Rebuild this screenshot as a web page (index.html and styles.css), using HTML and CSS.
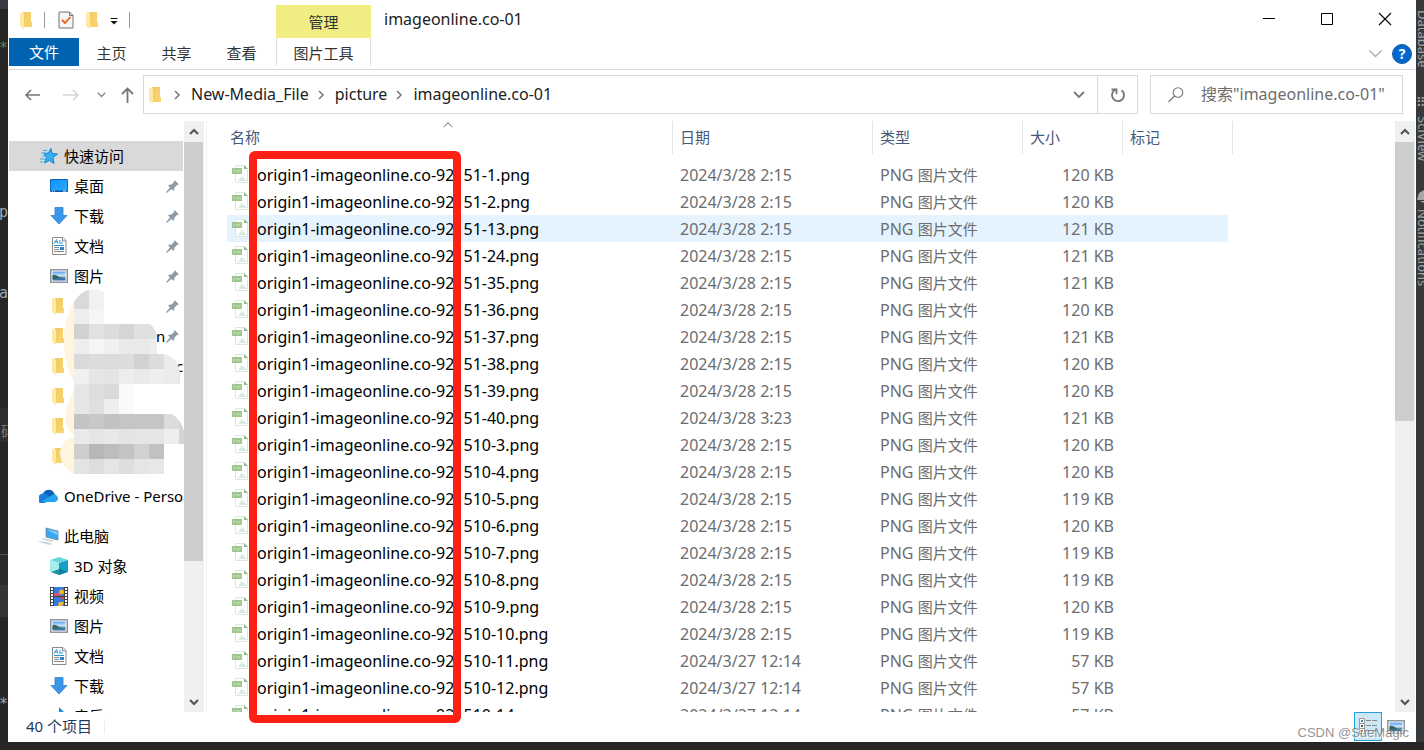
FILE: index.html
```html
<!DOCTYPE html>
<html lang="zh-CN">
<head>
<meta charset="utf-8">
<title>imageonline.co-01</title>
<link rel="stylesheet" href="styles.css">
</head>
<body>
<svg class="defs" aria-hidden="true">
  <defs>
    <linearGradient id="gf" x1="0" y1="0" x2="1" y2="1"><stop offset="0" stop-color="#f0c96c"/><stop offset="1" stop-color="#fbd66a"/></linearGradient>
    <linearGradient id="gs" x1="0" y1="0" x2="0" y2="1"><stop offset="0" stop-color="#5c9cf0"/><stop offset=".5" stop-color="#d8ecfa"/><stop offset=".62" stop-color="#5f97a4"/><stop offset="1" stop-color="#2f64b4"/></linearGradient>
    <linearGradient id="gd" x1="0" y1="0" x2="1" y2="1"><stop offset="0" stop-color="#1291ff"/><stop offset="1" stop-color="#2aabff"/></linearGradient>
  </defs>
  <symbol id="folder" viewBox="0 0 14 18"><path d="M4 1h8v10h1v5H4z" fill="url(#gf)"/><path d="M1 1l4 2v15l-4-3z" fill="#ffe8a3"/></symbol>
  <symbol id="desktop" viewBox="0 0 18 14"><path d="M.5.5h17v12H.5z" fill="url(#gd)" stroke="#0b67b5"/><path d="M1 12h16" stroke="#0a4f96"/><path d="M2 12h1m1 0h1m8 0h3" stroke="#e6f5ff"/></symbol>
  <symbol id="down" viewBox="0 0 18 18"><path d="M5 .5h8v8h4L9 17 1 8.500h4z" fill="#3996e8" stroke="#2e7fd0" stroke-width=".8"/></symbol>
  <symbol id="doc" viewBox="0 0 18 18"><path d="M2.500 .5h10.500l3 3v14H2.500z" fill="#fff" stroke="#8b8b8b"/><path d="M12.500.5V4H16" fill="#eee" stroke="#8b8b8b"/><path d="M4 6.500l2.500-4L8 6.500M5 5h3m1-1h2M9 6h4M4 8.500h10" fill="none" stroke="#2196d6"/><path d="M4 10.500h5m-5 2h5m-5 2h10" stroke="#888"/><path d="M10 10h4v3h-4z" fill="#3283c8"/></symbol>
  <symbol id="picture" viewBox="0 0 18 14"><path d="M.75.75h16.500v12.500H.75z" fill="#fff" stroke="#8f969c" stroke-width="1.500"/><path d="M2.500 2.500h13v9h-13z" fill="url(#gs)"/><path d="M2.500 6q3-1 6 1.500t5 1.500l-11 1z" fill="#35675c"/></symbol>
  <symbol id="pin" viewBox="0 0 13 13"><path d="M8.500 0L13 4.500l-2 .5-2.500 2.500-.5 3.500-2.500-2L.7 13l-.7-.7L4 7.500 2 5l3.500-.5L8 2z" fill="#8e9ba6"/></symbol>
  <symbol id="star" viewBox="0 0 18 16"><path d="M11 .5l1 5 5.500.5-4.500 3.500 1 6-4.500-3-5 2.500 2-5.500-2.500-4 4.500-.5z" fill="#35b0f5" stroke="#1481cc"/><path d="M3 2.500h4M1 5h4M2 8h3M0 11h5M0 14h3" stroke="#3ea9e8"/></symbol>
  <symbol id="cloud" viewBox="0 0 20 14"><path d="M4 13a4 4 0 0 1 0-8 6 6 0 0 1 11-1l2 4-7 5z" fill="#0a63b8"/><path d="M1 6a5 5 0 0 1 6-1l8 6-10 3a4 4 0 0 1-4-8z" fill="#1680dc"/><path d="M3 12.500L13 6q3-1.500 4.500.5A3.600 3.600 0 0 1 16 13H4z" fill="#28a3ed"/></symbol>
  <symbol id="pc" viewBox="0 0 20 18"><path d="M7 1l12 3v9L7 10z" fill="#35a9f5" stroke="#6f8794" stroke-width=".8"/><path d="M7.500 2l11 2.500v4z" fill="#7dcafa"/><path d="M4 11l11 2.500-3 1.500-10-3zM0 14l8 1 6 2-4 1-10-3z" fill="#cfd6da"/></symbol>
  <symbol id="cube" viewBox="0 0 18 18"><path d="M9 0l9 3-9 3-9-3z" fill="#66d6dc"/><path d="M0 3l9 3v12l-9-3z" fill="#9ce7e6"/><path d="M18 3L9 6v12l9-3z" fill="#159fc8"/><path d="M1 15l8-4 8 4-8 3z" fill="#087c95" opacity=".8"/><path d="M0 3l9 3v6L1 15z" fill="#a5eeee"/></symbol>
  <symbol id="film" viewBox="0 0 18 19"><path d="M0 0h18v19H0z" fill="#444"/><path d="M4 0h10v9H4zM4 10h10v9H4z" fill="#3979da"/><path d="M2 1v17M16 1v17" stroke="#fff" stroke-width="2" stroke-dasharray="2 1"/><path d="M4 6h5v3H4z" fill="#d75482"/><circle cx="11.500" cy="5" r="2.500" fill="#efba20"/><path d="M10 10h4l-2 3z" fill="#e24528"/><path d="M9 15h5l-2 4H8z" fill="#f3c02c"/></symbol>
  <symbol id="music" viewBox="0 0 16 18"><path d="M8 0l5 5v3L10 6v8a4 3 0 1 1-2-3z" fill="#1690ea"/></symbol>
  <symbol id="png" viewBox="0 0 17 18"><path d="M3.500.5H12L15.500 4v13.500h-12z" fill="#fff" stroke="#dce8d9"/><path d="M12 0l4 4h-4z" fill="#8dbd83"/><path d="M0 3h10v6H0z" fill="#9dc68d"/><path d="M2 7.500V5h1v1H2M5 7.500V5l1 2V5M9 5H7.500v2H9" fill="none" stroke="#c5dfb9" stroke-width=".7"/><path d="M6 16l4-5 2 2 3 3z" fill="#d6e9e3"/></symbol>
  <symbol id="chev-down" viewBox="0 0 12 8"><path d="M1 1l5 5 5-5" fill="none" stroke="currentColor" stroke-width="1.800"/></symbol>
  <symbol id="chev-right" viewBox="0 0 7 10"><path d="M1 1l4 4-4 4" fill="none" stroke="#777" stroke-width="1.500"/></symbol>
  <symbol id="sb-up" viewBox="0 0 10 8"><path d="M1 6l4-4 4 4" fill="none" stroke="#555" stroke-width="2.200"/></symbol>
  <symbol id="sb-down" viewBox="0 0 10 8"><path d="M1 2l4 4 4-4" fill="none" stroke="#555" stroke-width="2.200"/></symbol>
</svg>

<div class="desktop">
  <aside class="editor-left" aria-hidden="true">
    <span class="bit green">**</span><span class="bit p">p</span><span class="bit a">a</span><span class="bit han-dim">码</span><span class="bit stars">**</span>
  </aside>

  <main class="window">
    <header class="titlebar">
      <div class="quick">
        <svg width="14" height="18"><use href="#folder"/></svg>
        <i class="sep"></i>
        <button class="plain props" aria-label="属性"><svg width="16" height="18" viewBox="0 0 16 18"><path d="M1 1h10.500l3.500 3.500V17H1z" fill="#f6f6f6" stroke="#757575"/><path d="M11.500 1v3.500H15" fill="none" stroke="#757575"/><path d="M4 9l3 3 5.500-6" fill="none" stroke="#ee5a17" stroke-width="1.800"/></svg></button>
        <button class="plain" aria-label="新建文件夹"><svg width="14" height="18"><use href="#folder"/></svg></button>
        <button class="plain more" aria-label="自定义"><svg width="8" height="7" viewBox="0 0 8 7"><path d="M.5 0h7v1h-7zM.5 3h7L4 6.500z" fill="#111"/></svg></button>
        <i class="sep"></i>
      </div>
      <div class="context">管理</div>
      <h1>imageonline.co-01</h1>
      <div class="controls">
        <button aria-label="最小化"><svg width="12" height="12" viewBox="0 0 12 12"><path d="M0 5.500h12" stroke="#000"/></svg></button>
        <button aria-label="最大化"><svg width="12" height="12" viewBox="0 0 12 12"><path d="M.5.5h11v11H.5z" fill="none" stroke="#000"/></svg></button>
        <button aria-label="关闭"><svg width="12" height="12" viewBox="0 0 12 12"><path d="M0 0l12 12m0-12L0 12" stroke="#000" stroke-width="1.100"/></svg></button>
      </div>
    </header>

    <nav class="ribbon">
      <button class="tab file">文件</button><button class="tab">主页</button><button class="tab">共享</button><button class="tab">查看</button><button class="tab tools">图片工具</button>
      <button class="plain collapse" aria-label="展开功能区"><svg width="13" height="8" viewBox="0 0 13 8"><path d="M.5.5l6 6 6-6" fill="none" stroke="#aaa" stroke-width="1.300"/></svg></button>
      <button class="help" aria-label="帮助">?</button>
    </nav>

    <div class="navbar">
      <div class="arrows">
        <button class="plain" aria-label="返回"><svg width="16" height="12" viewBox="0 0 16 12"><path d="M6 1L1 6l5 5M1 6h14" fill="none" stroke="#777" stroke-width="1.600"/></svg></button>
        <button class="plain" aria-label="前进"><svg width="16" height="12" viewBox="0 0 16 12"><path d="M10 1l5 5-5 5M15 6H0" fill="none" stroke="#d5d5d5" stroke-width="1.600"/></svg></button>
        <button class="plain recent" aria-label="最近的位置"><svg width="9" height="6"><use href="#chev-down"/></svg></button>
        <button class="plain" aria-label="上移"><svg width="13" height="16" viewBox="0 0 13 16"><path d="M1 7l5.500-5.500L12 7M6.500 2v14" fill="none" stroke="#777" stroke-width="1.800"/></svg></button>
      </div>
      <div class="address">
        <svg width="14" height="18"><use href="#folder"/></svg>
        <svg width="7" height="10"><use href="#chev-right"/></svg><a href="#">New-Media_File</a>
        <svg width="7" height="10"><use href="#chev-right"/></svg><a href="#">picture</a>
        <svg width="7" height="10"><use href="#chev-right"/></svg><a href="#">imageonline.co-01</a>
        <button class="plain drop" aria-label="以前的位置"><svg width="12" height="8"><use href="#chev-down"/></svg></button>
        <button class="plain refresh" aria-label="刷新"><svg width="16" height="16" viewBox="0 0 16 16"><path d="M11.500 3.300A6 6 0 1 1 5.500 2.700" fill="none" stroke="#777" stroke-width="1.900"/><path d="M6.500 7V2.500H1.500" fill="none" stroke="#777" stroke-width="1.800"/></svg></button>
      </div>
      <label class="search">
        <svg width="16" height="16" viewBox="0 0 16 16"><circle cx="10" cy="5.500" r="4.800" fill="none" stroke="#777" stroke-width="1.100"/><path d="M6.500 9L.5 15" stroke="#777" stroke-width="1.200"/></svg>
        <input type="text" aria-label="搜索" placeholder="搜索&quot;imageonline.co-01&quot;">
      </label>
    </div>

    <div class="content">
      <div class="sidebar">
        <ul class="tree">
          <li class="root active"><svg width="18" height="16"><use href="#star"/></svg>快速访问</li>
          <li><svg width="18" height="14"><use href="#desktop"/></svg>桌面<svg class="pin" width="13" height="13"><use href="#pin"/></svg></li>
          <li><svg width="18" height="18"><use href="#down"/></svg>下载<svg class="pin" width="13" height="13"><use href="#pin"/></svg></li>
          <li><svg width="18" height="18"><use href="#doc"/></svg>文档<svg class="pin" width="13" height="13"><use href="#pin"/></svg></li>
          <li><svg width="18" height="14"><use href="#picture"/></svg>图片<svg class="pin" width="13" height="13"><use href="#pin"/></svg></li>
          <li class="dir"><svg width="14" height="18"><use href="#folder"/></svg><svg class="pin" width="13" height="13"><use href="#pin"/></svg></li>
          <li class="dir"><svg width="14" height="18"><use href="#folder"/></svg><span class="tail">n</span><svg class="pin near" width="13" height="13"><use href="#pin"/></svg></li>
          <li class="dir"><svg width="14" height="18"><use href="#folder"/></svg><span class="tail edge">c</span></li>
          <li class="dir"><svg width="14" height="18"><use href="#folder"/></svg></li>
          <li class="dir"><svg width="14" height="18"><use href="#folder"/></svg></li>
          <li class="dir"><svg width="14" height="18"><use href="#folder"/></svg></li>
          <li class="root group"><svg width="20" height="14"><use href="#cloud"/></svg>OneDrive - Personal</li>
          <li class="root group"><svg width="20" height="18"><use href="#pc"/></svg>此电脑</li>
          <li><svg width="18" height="18"><use href="#cube"/></svg>3D 对象</li>
          <li><svg width="18" height="19"><use href="#film"/></svg>视频</li>
          <li><svg width="18" height="14"><use href="#picture"/></svg>图片</li>
          <li><svg width="18" height="18"><use href="#doc"/></svg>文档</li>
          <li><svg width="18" height="18"><use href="#down"/></svg>下载</li>
          <li><svg width="18" height="18"><use href="#music"/></svg>音乐</li>
        </ul>
        <svg class="mosaic" width="126" height="186" viewBox="0 0 126 186" aria-hidden="true">
          <clipPath id="blot"><path d="M4 45Q8 12 25 2Q36-2 44 3V35H90Q97 40 97 50V65H104Q118 69 120 83V95H74V125H112Q125 133 125 152L120 163V155H104V185H14Q0 177 0 163Q2 150 15 147Q-1 138 9 112Q16 100 14 93Q3 76 4 45z"/></clipPath>
          <g clip-path="url(#blot)" id="cells"><path d="M0 0h14v186H0z" fill="#fff5df"/><path d="M14 0h15v6H14z" fill="#d9d9d9"/><path d="M29 0h16v6H29z" fill="#f1f1f1"/></g>
        </svg>
      </div>
      <div class="scrollbar"><button aria-label="向上"><svg width="10" height="8"><use href="#sb-up"/></svg></button><div class="thumb tree-thumb"></div><button aria-label="向下"><svg width="10" height="8"><use href="#sb-down"/></svg></button></div>

      <div class="files">
        <svg class="sort" width="10" height="6" viewBox="0 0 10 6"><path d="M.5 5L5 .8 9.500 5" fill="none" stroke="#666"/></svg>
        <table>
          <colgroup><col class="c-name"><col class="c-date"><col class="c-type"><col class="c-size"><col class="c-tag"><col class="c-end"></colgroup>
          <thead><tr><th><div>名称</div></th><th><div>日期</div></th><th><div>类型</div></th><th><div>大小</div></th><th colspan="2"><div>标记</div></th></tr></thead>
          <tbody id="rows"></tbody>
        </table>
      </div>
      <div class="scrollbar"><button aria-label="向上"><svg width="10" height="8"><use href="#sb-up"/></svg></button><div class="thumb list-thumb"></div><button aria-label="向下"><svg width="10" height="8"><use href="#sb-down"/></svg></button></div>
    </div>

    <footer class="status">
      <span class="count">40 个项目</span>
      <div class="views">
        <button class="on" aria-label="详细信息"><svg width="19" height="18" viewBox="0 0 19 18"><path d="M.5.5h5v5h-5zM.5 5.500h5v5h-5zM.5 10.500h5v5h-5z" fill="#fff" stroke="#999"/><path d="M2 2h2v2H2z" fill="#3d8a9a"/><path d="M2 7h2v2H2z" fill="#3a6f4c"/><path d="M2 12h2v2H2z" fill="#c8502a"/><path d="M7 2.500h5m1 0h5M7 7.500h5m1 0h5M7 12.500h5m1 0h5" stroke="#888"/></svg></button>
        <button aria-label="大图标"><svg width="18" height="14"><use href="#picture"/></svg></button>
      </div>
    </footer>
    <div class="marker"></div>
    <div class="watermark">CSDN @SueMagic</div>
  </main>

  <aside class="editor-right" aria-hidden="true">
    <span class="v db">Database</span><span class="grip">⠿</span><span class="v sci">SciView</span><svg width="8" height="13" viewBox="0 0 8 13"><path d="M1 10l2-7 5-3v10zM4 11h4v2z" fill="#a5a7a8"/></svg><span class="v note">Notifications</span>
  </aside>
</div>
<script src="script.js"></script>
</body>
</html>
```

FILE: styles.css
```css
* { box-sizing: border-box; }
body { margin: 0; background: #262626; color: #000; font: 15px/20px "Noto Sans", "Noto Sans CJK SC", sans-serif; }
svg { display: block; flex: none; overflow: visible; }
button { font: inherit; color: inherit; border: 0; padding: 0; background: none; display: flex; align-items: center; justify-content: center; }
.defs { position: absolute; width: 0; height: 0; }
.desktop { display: grid; grid-template-columns: 8px minmax(0, 1fr) 8px; height: 100vh; padding-bottom: 8px; overflow: hidden; }

.editor-left { position: relative; overflow: hidden; background: linear-gradient(#373b3f 0 9px, #262626 9px 408px, #2e2e2e 408px 442px, #262626 442px 554px, #555 554px 555px, #2b2b2b 555px 585px, #333537 585px 617px, #262626 617px); }
.bit { position: absolute; right: 0; color: #9aa5b1; font: 15px/20px "DejaVu Sans Mono", monospace; }
.green { top: 38px; color: #54804f; }
.p { top: 202px; }
.a { top: 283px; }
.han-dim { top: 421px; left: 1px; color: #777; font-family: "Noto Sans CJK SC", sans-serif; }
.stars { top: 694px; }
.editor-right { display: flex; flex-direction: column; align-items: flex-start; overflow: hidden; background: #37393b; color: #a2a4a5; font-size: 13px; line-height: 13px; }
.v { writing-mode: vertical-rl; }
.db { padding-top: 10px; }
.grip { padding-top: 28px; height: 48px; }
.sci { height: 74px; }
.note { padding-top: 6px; }

.window { position: relative; display: flex; flex-direction: column; min-width: 0; min-height: 0; padding: 0 1px; background: #fff; }
.plain { flex: none; }
.titlebar { display: flex; height: 38px; flex: none; }
.quick { display: flex; align-items: center; gap: 11px; width: 267px; padding: 2px 0 0 10px; }
.sep { width: 1px; height: 16px; background: #999; }
.props { margin-left: 2px; }
.more { padding-top: 3px; }
.context { width: 95px; margin-top: 5px; padding-top: 7px; text-align: center; background: #f0ee82; color: #333; }
h1 { margin: 0 auto 0 13px; font-size: 16px; font-weight: 400; line-height: 38px; color: #222; }
.controls { display: flex; padding-right: 1px; }
.controls button { width: 58px; }

.ribbon { display: flex; align-items: center; height: 32px; flex: none; padding-right: 3px; border-bottom: 1px solid #dadada; }
.tab { width: 65px; height: 28px; align-self: flex-start; padding-top: 2px; color: #333; }
.file { width: 70px; padding: 0; background: #0063b1; color: #fff; }
.tools { width: 95px; margin-left: 2px; border: solid #ddd; border-width: 0 1px; }
.collapse { margin-left: auto; }
.help { width: 20px; height: 20px; margin-left: 10px; border-radius: 50%; border: 1px solid #175ca2; background: #0067cf; color: #fff; font-weight: 700; font-size: 14px; line-height: 18px; }

.navbar { display: flex; flex: none; height: 51px; padding: 5px 12px 7px 16px; }
.arrows { display: flex; align-items: center; width: 118px; gap: 22px; }
.arrows .recent { margin: 0 -7px 0 -4px; color: #888; }
.address { display: flex; align-items: center; flex: 1; min-width: 0; height: 39px; padding-left: 4px; border: 1px solid #d9d9d9; font-size: 16px; color: #777; }
.address a { color: #222; text-decoration: none; margin: 0 9px 2px 10px; }
.address > svg:first-child { margin-right: 12px; }
.drop { width: 36px; height: 37px; margin-left: auto; }
.refresh { width: 40px; height: 37px; border-left: 1px solid #d9d9d9; }
.search { display: flex; align-items: center; gap: 17px; width: 253px; height: 39px; margin-left: 12px; padding-left: 17px; border: 1px solid #d9d9d9; }
.search input { flex: 1; min-width: 0; border: 0; padding: 0 0 2px; background: none; font: inherit; font-size: 16px; outline: 0; }
.search input::placeholder { color: #6d6d6d; opacity: 1; }

.content { display: flex; flex: 1; min-height: 0; }
.sidebar { position: relative; width: 175px; flex: none; overflow: hidden; }
.tree { list-style: none; margin: 0; padding: 20px 0 0; width: 174px; overflow: hidden; }
.tree li { display: flex; align-items: center; gap: 6px; height: 30px; padding: 0 4px 0 41px; white-space: nowrap; }
.tree .dir { padding-left: 42px; gap: 9px; }
.tree .root { padding-left: 31px; }
.tree .root > svg[width="20"] { margin: 0 -1px; }
.tree .active { background: #d9d9d9; }
.tree .group { margin-top: 10px; }
.tree .pin { margin-left: auto; }
.tail { margin-left: 82px; }
.tree .near { margin-left: -8px; }
.tail.edge { margin-left: 102px; }
.mosaic { position: absolute; left: 51px; top: 168px; }
.scrollbar { display: flex; flex-direction: column; width: 20px; flex: none; background: #f0f0f0; }
.scrollbar button { flex: none; height: 21px; }
.scrollbar button:last-child { margin-top: auto; }
.thumb { width: 19px; background: #cdcdcd; }
.tree-thumb { flex: 0 1 419px; }
.list-thumb { flex: 0 1 279px; }

.files { position: relative; flex: 1; min-width: 0; overflow: hidden; margin-left: 2px; padding-left: 20px; border-left: 1px solid #f3f3f3; }
.sort { position: absolute; left: 236px; top: 1px; }
table { table-layout: fixed; border-collapse: collapse; width: 1006px; }
.c-name { width: 446px; }
.c-date { width: 200px; }
.c-type { width: 150px; }
.c-size { width: 100px; }
.c-tag { width: 105px; }
th { padding: 0 0 7px; font-weight: 400; text-align: left; color: #44597a; }
th div { height: 33px; padding: 6px 0 0 7px; border-right: 1px solid #e5e5e5; }
th:first-child div { padding-left: 3px; }
tbody { font-size: 16px; line-height: 20px; color: #6d6d6d; }
td { height: 27px; padding: 0 9px 0 7px; white-space: nowrap; }
td:first-child { padding-left: 5px; color: #000; }
.name { display: flex; align-items: center; gap: 8px; }
.name svg { margin-top: -2px; }
.han { font-size: 15px; }
.size { text-align: right; }
.hover td:not(:last-child) { background: #e5f3ff; }

.status { display: flex; flex: none; justify-content: space-between; height: 30px; color: #1e395b; }
.count { margin-top: 7px; height: 15px; padding: 0 12px 0 17px; border-right: 1px solid #eee; line-height: 14px; }
.views { display: flex; padding-right: 5px; }
.views button { width: 28px; height: 29px; }
.views .on { background: #cce8f6; border: 1px solid #26a0da; }

.marker { position: absolute; left: 241px; top: 151px; width: 212px; bottom: 19px; border: 8px solid #fe2013; border-radius: 6px; }
.watermark { position: absolute; right: 7px; bottom: -1px; color: #777c; font: 13px/20px "Liberation Sans", sans-serif; text-shadow: 1px 1px 1px #fff; }
```

FILE: script.js
```javascript
const files = [
  ['51-1', '3/28 2:15', 120], ['51-2', '3/28 2:15', 120], ['51-13', '3/28 2:15', 121],
  ['51-24', '3/28 2:15', 121], ['51-35', '3/28 2:15', 121], ['51-36', '3/28 2:15', 120],
  ['51-37', '3/28 2:15', 121], ['51-38', '3/28 2:15', 120], ['51-39', '3/28 2:15', 120],
  ['51-40', '3/28 3:23', 121], ['510-3', '3/28 2:15', 120], ['510-4', '3/28 2:15', 120],
  ['510-5', '3/28 2:15', 119], ['510-6', '3/28 2:15', 120], ['510-7', '3/28 2:15', 119],
  ['510-8', '3/28 2:15', 119], ['510-9', '3/28 2:15', 120], ['510-10', '3/28 2:15', 119],
  ['510-11', '3/27 12:14', 57], ['510-12', '3/27 12:14', 57], ['510-14', '3/27 12:14', 57]
];
document.getElementById('rows').innerHTML = files.map(([n, d, s], i) =>
  `<tr${i === 2 ? ' class="hover"' : ''}><td><div class="name"><svg width="17" height="18"><use href="#png"/></svg>origin1-imageonline.co-921${n}.png</div></td><td>2024/${d}</td><td>PNG <span class="han">图片文件</span></td><td class="size">${s} KB</td><td></td><td></td></tr>`
).join('');

// Grey levels of the blurred folder names, one list per 15px band.
const bands = [
  ['d9', 'f1'], ['ed', 'f6'],
  ['d1', 'dfe1e5', 'dc', 'd2d6d5', 'e0', 'e0'], ['ed', 'f4f6f6', 'f0', 'e9', 'e9', 'ed'],
  ['d9', 'dc', 'd9dcdb', 'dc', 'd1', 'dc', 'ebebea', 'e8'], ['f0', 'e5', 'e2e5e4', 'ed', 'ea', 'ee', 'ebebea', 'e0'],
  ['e5', 'dd', 'd9', 'f9fbfb'], ['e6', 'df', 'ee', 'f9fbfb'],
  ['c3', 'c8', 'c2', 'c3c6c5', 'c3c6c5', 'c5', 'dc', 'd6'], ['e9', 'e5', 'e8e8e5', 'e3', 'e5', 'e5', 'eeeeec', 'd5'],
  ['cd', 'b7', 'bd', 'c3', 'd1d1cf', 'c0c2c1', 'fbfdfd'], ['e3', 'dd', 'e5', 'dd', 'e5', 'e6e8e7']
];
document.getElementById('cells').innerHTML += bands.map((band, y) => band.map((c, x) =>
  `<rect x="${14 + x * 15}" y="${y * 15 + 5}" width="15" height="15" fill="#${c.length === 2 ? c.repeat(3) : c}"/>`
).join('')).join('');
```
